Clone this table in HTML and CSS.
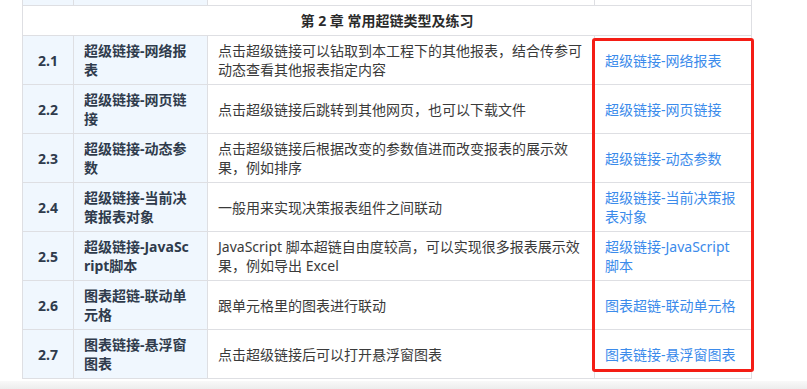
FILE: index.html
```html
<!DOCTYPE html>
<html lang="zh-CN">
<head>
<meta charset="utf-8">
<title>第 2 章 常用超链类型及练习</title>
<link rel="stylesheet" href="styles.css">
</head>
<body>
<main class="sheet">
  <div class="grid">
    <div class="cell num stub"></div>
    <div class="cell name stub"></div>
    <div class="cell desc stub"></div>
    <div class="cell link stub"></div>

    <div class="cell chapter">第 2 章 常用超链类型及练习</div>

    <div class="cell num">2.1</div>
    <div class="cell name">超级链接-网络报<wbr>表</div>
    <div class="cell desc">点击超级链接可以钻取到本工程下的其他报表，结合传参可动态查看其他报表指定内容</div>
    <div class="cell link"><a href="#">超级链接-网络报表</a></div>

    <div class="cell num">2.2</div>
    <div class="cell name">超级链接-网页链<wbr>接</div>
    <div class="cell desc">点击超级链接后跳转到其他网页，也可以下载文件</div>
    <div class="cell link"><a href="#">超级链接-网页链接</a></div>

    <div class="cell num">2.3</div>
    <div class="cell name">超级链接-动态参<wbr>数</div>
    <div class="cell desc">点击超级链接后根据改变的参数值进而改变报表的展示效果，例如排序</div>
    <div class="cell link"><a href="#">超级链接-动态参数</a></div>

    <div class="cell num">2.4</div>
    <div class="cell name">超级链接-当前决<wbr>策报表对象</div>
    <div class="cell desc">一般用来实现决策报表组件之间联动</div>
    <div class="cell link"><a href="#">超级链接-当前决策报表对象</a></div>

    <div class="cell num">2.5</div>
    <div class="cell name">超级链接-JavaSc<wbr>ript脚本</div>
    <div class="cell desc">JavaScript 脚本超链自由度较高，可以实现很多报表展示效果，例如导出 Excel</div>
    <div class="cell link"><a href="#">超级链接-JavaScript脚本</a></div>

    <div class="cell num">2.6</div>
    <div class="cell name">图表超链-联动单<wbr>元格</div>
    <div class="cell desc">跟单元格里的图表进行联动</div>
    <div class="cell link"><a href="#">图表超链-联动单元格</a></div>

    <div class="cell num">2.7</div>
    <div class="cell name">图表链接-悬浮窗<wbr>图表</div>
    <div class="cell desc">点击超级链接后可以打开悬浮窗图表</div>
    <div class="cell link"><a href="#">图表链接-悬浮窗图表</a></div>
  </div>
  <div class="highlight"></div>
</main>
<div class="hscroll"></div>
</body>
</html>
```

FILE: styles.css
```css
html, body {
  margin: 0;
  padding: 0;
  background: #ffffff;
}

body {
  width: 807px;
  height: 389px;
  overflow: hidden;
  font-family: "Noto Sans", "Noto Sans CJK SC", sans-serif;
  font-size: 14px;
  line-height: 19px;
  color: #333333;
}

.sheet {
  position: relative;
  margin-left: 22px;
  width: 730px;
}

.grid {
  display: grid;
  grid-template-columns: 50px 133px 386px 156px;
  gap: 1px;
  padding: 0 1px 1px 1px;
  background: #dedfe3;
}

.cell {
  display: flex;
  align-items: center;
  padding: 5px 10px;
  background: #ffffff;
  min-width: 0;
}

.cell.stub {
  height: 5px;
  padding: 0;
}

.num {
  justify-content: center;
  padding: 5px 4px;
  background: #f0f7fe;
  font-weight: 700;
  color: #2f3b4c;
}

.name {
  background: #f0f7fe;
  font-weight: 700;
  color: #2f3b4c;
}

.desc {
  color: #3a3a3a;
}

.link a {
  color: #3b8beb;
  text-decoration: none;
}

.chapter {
  grid-column: 1 / -1;
  justify-content: center;
  font-weight: 700;
  color: #2b2b2b;
}

.highlight {
  position: absolute;
  left: 570px;
  top: 38px;
  width: 156px;
  height: 328px;
  border: 3px solid #f41d15;
  border-radius: 3px;
  pointer-events: none;
}

.hscroll {
  margin-top: 2px;
  height: 8px;
  background: linear-gradient(#f9f9f9, #ededed);
}
```
